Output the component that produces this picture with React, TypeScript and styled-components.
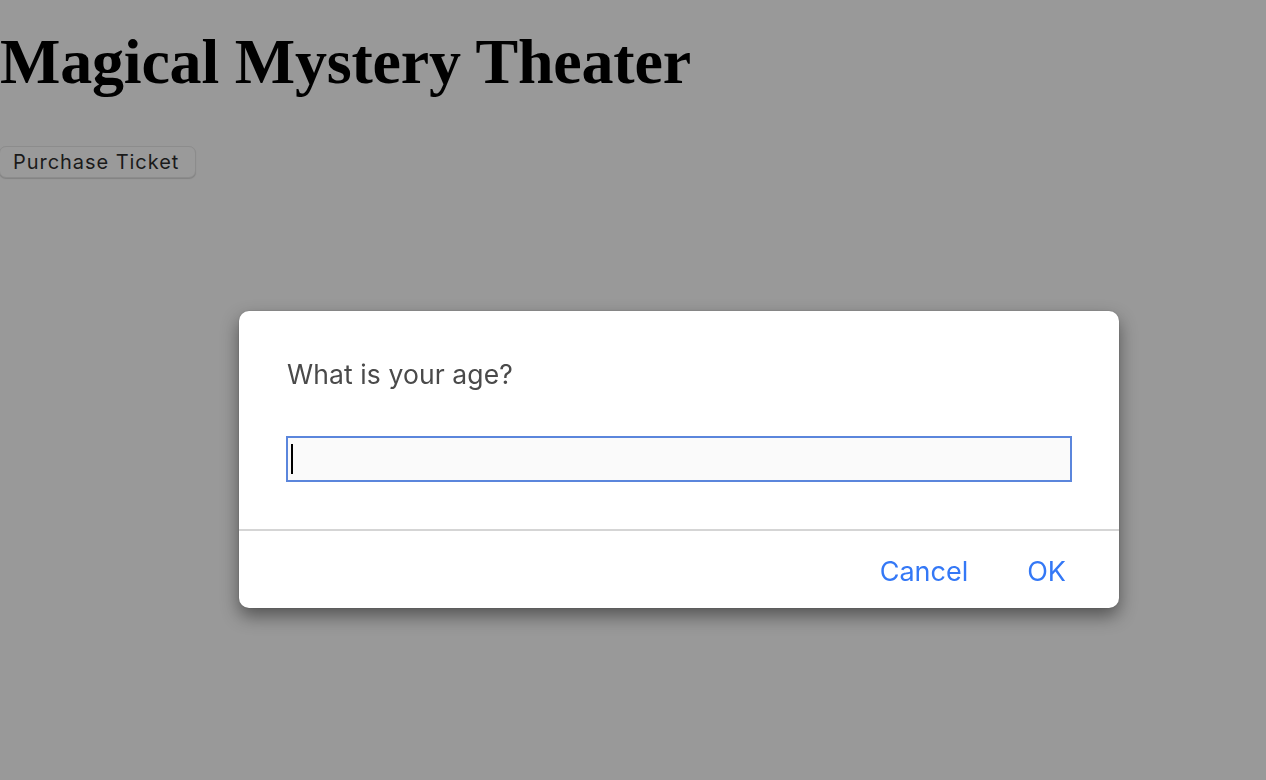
import React from "react";
import styled, { createGlobalStyle } from "styled-components";

const Global = createGlobalStyle`
  html, body { margin: 0; padding: 0; background: #999999; }
  body { font-family: "Liberation Serif", "Times New Roman", serif; }
`;

const Page = styled.div`
  width: 1266px;
  height: 780px;
  background: #999999;
  overflow: hidden;
`;

const Title = styled.h1`
  margin: 25px 0 0 0;
  font-family: "Liberation Serif", "Times New Roman", serif;
  font-weight: 700;
  font-size: 64px;
  line-height: 74px;
  color: #000;
  letter-spacing: -0.2px;
`;

const PurchaseButton = styled.button`
  margin-top: 47px;
  display: block;
  height: 32px;
  padding: 0 16px 0 13px;
  margin-left: -1px;
  border: 1px solid #8c8c8c;
  border-radius: 7px;
  background: #9a9a9a;
  box-shadow: 0 1px 1px rgba(0, 0, 0, 0.15);
  font-family: Inter, "Liberation Sans", sans-serif;
  font-size: 20px;
  letter-spacing: 0.95px;
  color: #1a1a1a;
`;

const Overlay = styled.div`
  position: fixed;
  inset: 0;
  display: flex;
  align-items: flex-start;
  padding: 311px 0 0 239px;
`;

const Dialog = styled.div`
  width: 880px;
  height: 297px;
  background: #ffffff;
  border-radius: 10px;
  box-shadow: 0 8px 18px rgba(0, 0, 0, 0.45), 0 0 2px rgba(0, 0, 0, 0.2);
  display: flex;
  flex-direction: column;
  overflow: hidden;
`;

const Body = styled.div`
  padding: 46px 47px 47px 47px;
  display: flex;
  flex-direction: column;
  gap: 45px;
`;

const Prompt = styled.div`
  font-family: Inter, "Liberation Sans", sans-serif;
  font-size: 26.5px;
  line-height: 34px;
  letter-spacing: 0.1px;
  color: #4a4a4a;
  padding-left: 1px;
`;

const Field = styled.div`
  height: 46px;
  width: 786px;
  box-sizing: border-box;
  border: 2px solid #5b86dc;
  background: #fafafa;
  display: flex;
  align-items: center;
  padding-left: 3px;
`;

const Caret = styled.div`
  width: 2px;
  height: 30px;
  background: #000;
`;

const Divider = styled.div`
  height: 2px;
  background: #d5d5d5;
`;

const Footer = styled.div`
  flex: 1;
  display: flex;
  justify-content: flex-end;
  align-items: center;
  gap: 59px;
  padding: 4px 53px 0 0;
`;

const ActionButton = styled.button`
  border: none;
  background: none;
  padding: 0;
  font-family: Inter, "Liberation Sans", sans-serif;
  font-size: 27px;
  font-weight: 400;
  color: #3478f6;
`;

export default function App() {
  return (
    <Page>
      <Global />
      <Title>Magical Mystery Theater</Title>
      <PurchaseButton>Purchase Ticket</PurchaseButton>
      <Overlay>
        <Dialog>
          <Body>
            <Prompt>What is your age?</Prompt>
            <Field>
              <Caret />
            </Field>
          </Body>
          <Divider />
          <Footer>
            <ActionButton>Cancel</ActionButton>
            <ActionButton>OK</ActionButton>
          </Footer>
        </Dialog>
      </Overlay>
    </Page>
  );
}
